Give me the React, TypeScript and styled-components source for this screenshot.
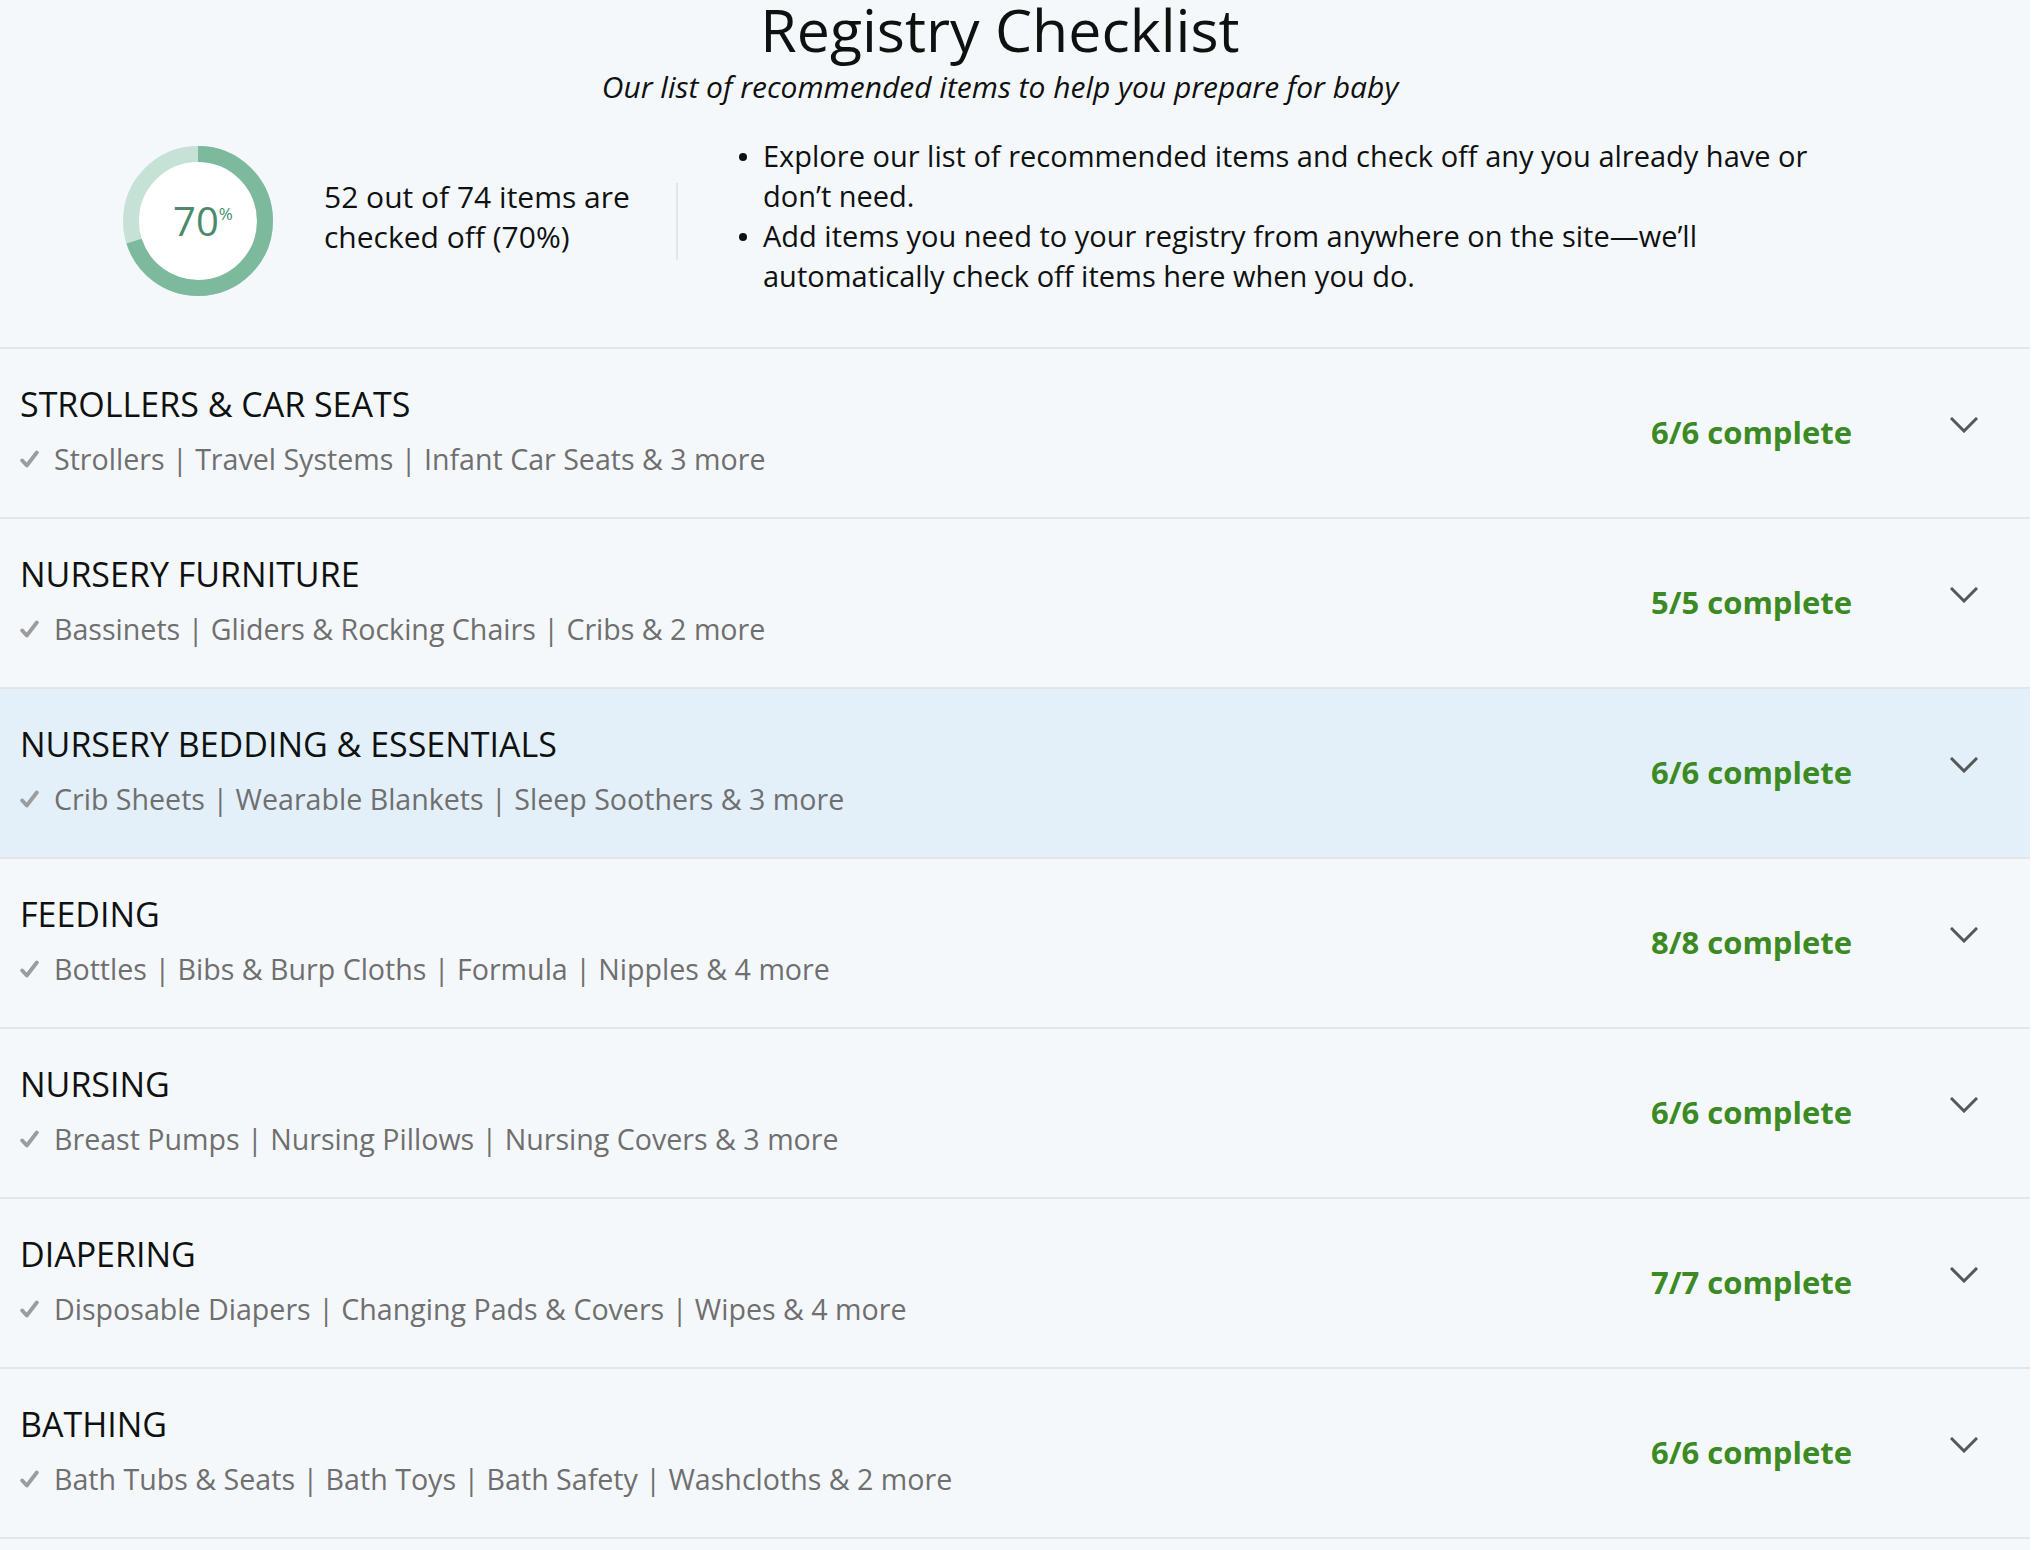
import React from "react";
import styled, { createGlobalStyle } from "styled-components";

const GlobalStyle = createGlobalStyle`
  html, body { margin: 0; padding: 0; background: #ffffff; }
  body { font-family: "Open Sans", "Noto Sans", Arial, sans-serif; color: #0f1111; }
  * { box-sizing: border-box; }
`;

const Page = styled.div`
  width: 2030px;
  min-height: 1550px;
  background: #f5f8fb;
  overflow: hidden;
`;

const Header = styled.header`
  width: 2000px;
  display: flex;
  flex-direction: column;
  align-items: center;
  padding-bottom: 46px;
`;

const Title = styled.h1`
  margin: 0;
  font-size: 59px;
  line-height: 58px;
  font-weight: 400;
  color: #0f1111;
`;

const Subtitle = styled.p`
  margin: 11px 0 0;
  font-size: 30px;
  line-height: 36px;
  font-style: italic;
  color: #0f1111;
`;

const Summary = styled.section`
  align-self: stretch;
  margin-top: 36px;
  height: 160px;
  display: flex;
  align-items: center;
  padding-left: 123px;
`;

const Ring = styled.div`
  display: grid;
  width: 150px;
  height: 150px;
  & > * { grid-area: 1 / 1; }
`;

const RingLabel = styled.div`
  display: flex;
  align-items: flex-start;
  justify-content: center;
  align-self: center;
  padding-left: 10px;
  color: #4b8b6c;
`;

const RingNumber = styled.span`
  font-size: 40px;
  line-height: 44px;
`;

const RingPercent = styled.span`
  font-size: 17px;
  line-height: 20px;
  margin-top: 5px;
`;

const Stats = styled.p`
  margin: 0 32px 8px 51px;
  width: 320px;
  font-size: 30px;
  line-height: 40px;
  color: #0f1111;
`;

const Divider = styled.div`
  width: 2px;
  height: 77px;
  background: #e2e6ea;
`;

const Bullets = styled.ul`
  margin: 0 0 10px 61px;
  padding: 0;
  list-style: none;
  width: 1110px;
`;

const BulletItem = styled.li`
  display: flex;
  font-size: 29px;
  line-height: 40px;
  color: #0f1111;
  &::before {
    content: "";
    flex: 0 0 8px;
    width: 8px;
    height: 8px;
    border-radius: 50%;
    background: #0f1111;
    margin: 17px 16px 0 0;
  }
`;

const List = styled.div`
  border-top: 2px solid #e4e5e6;
`;

const Row = styled.div<{ $active?: boolean }>`
  height: 170px;
  display: grid;
  grid-template-columns: 1fr auto auto;
  align-items: start;
  padding: 0 52px 0 20px;
  border-bottom: 2px solid #e4e5e6;
  background: ${(p) => (p.$active ? "#e3f0f9" : "transparent")};
`;

const RowText = styled.div`
  display: flex;
  flex-direction: column;
  gap: 15px;
  padding-top: 35px;
`;

const RowTitle = styled.h2`
  margin: 0;
  font-size: 34px;
  line-height: 40px;
  font-weight: 400;
  color: #0f1111;
`;

const RowItems = styled.div`
  display: flex;
  align-items: center;
  gap: 15px;
  font-size: 28.6px;
  line-height: 40px;
  color: #6f6f6f;
`;

const Status = styled.span`
  margin-top: 63px;
  font-size: 31px;
  line-height: 40px;
  font-weight: 700;
  color: #3b8a23;
`;

const Chevron = styled.svg`
  margin: 68px 0 0 98px;
  width: 28px;
  height: 16px;
  display: block;
`;

const CheckIcon = () => (
  <svg width="19" height="18" viewBox="0 0 19 18" aria-hidden>
    <path d="M2.2 10.5 L6.8 15.5 L16.8 2.5" fill="none" stroke="#9c9c9c" strokeWidth="3.8" strokeLinecap="round" strokeLinejoin="round" />
  </svg>
);

const rows = [
  { title: "STROLLERS & CAR SEATS", items: "Strollers | Travel Systems | Infant Car Seats & 3 more", status: "6/6 complete" },
  { title: "NURSERY FURNITURE", items: "Bassinets | Gliders & Rocking Chairs | Cribs & 2 more", status: "5/5 complete" },
  { title: "NURSERY BEDDING & ESSENTIALS", items: "Crib Sheets | Wearable Blankets | Sleep Soothers & 3 more", status: "6/6 complete", active: true },
  { title: "FEEDING", items: "Bottles | Bibs & Burp Cloths | Formula | Nipples & 4 more", status: "8/8 complete" },
  { title: "NURSING", items: "Breast Pumps | Nursing Pillows | Nursing Covers & 3 more", status: "6/6 complete" },
  { title: "DIAPERING", items: "Disposable Diapers | Changing Pads & Covers | Wipes & 4 more", status: "7/7 complete" },
  { title: "BATHING", items: "Bath Tubs & Seats | Bath Toys | Bath Safety | Washcloths & 2 more", status: "6/6 complete" },
];

const R = 67;
const C = 2 * Math.PI * R;

export default function App() {
  return (
    <Page>
      <GlobalStyle />
      <Header>
        <Title>Registry Checklist</Title>
        <Subtitle>Our list of recommended items to help you prepare for baby</Subtitle>
        <Summary>
          <Ring>
            <svg width="150" height="150" viewBox="0 0 150 150">
              <circle cx="75" cy="75" r="60" fill="#ffffff" />
              <circle cx="75" cy="75" r={R} fill="none" stroke="#c6e2d6" strokeWidth="16" />
              <circle
                cx="75"
                cy="75"
                r={R}
                fill="none"
                stroke="#7cb99d"
                strokeWidth="16"
                strokeDasharray={`${C * 0.7} ${C}`}
                transform="rotate(-90 75 75)"
              />
            </svg>
            <RingLabel>
              <RingNumber>70</RingNumber>
              <RingPercent>%</RingPercent>
            </RingLabel>
          </Ring>
          <Stats>52 out of 74 items are checked off (70%)</Stats>
          <Divider />
          <Bullets>
            <BulletItem>Explore our list of recommended items and check off any you already have or don’t need.</BulletItem>
            <BulletItem>Add items you need to your registry from anywhere on the site—we’ll automatically check off items here when you do.</BulletItem>
          </Bullets>
        </Summary>
      </Header>
      <List>
        {rows.map((r) => (
          <Row key={r.title} $active={r.active}>
            <RowText>
              <RowTitle>{r.title}</RowTitle>
              <RowItems>
                <CheckIcon />
                <span>{r.items}</span>
              </RowItems>
            </RowText>
            <Status>{r.status}</Status>
            <Chevron viewBox="0 0 28 16" aria-hidden>
              <path d="M2 2 L14 14 L26 2" fill="none" stroke="#555858" strokeWidth="3" strokeLinecap="square" />
            </Chevron>
          </Row>
        ))}
      </List>
    </Page>
  );
}
